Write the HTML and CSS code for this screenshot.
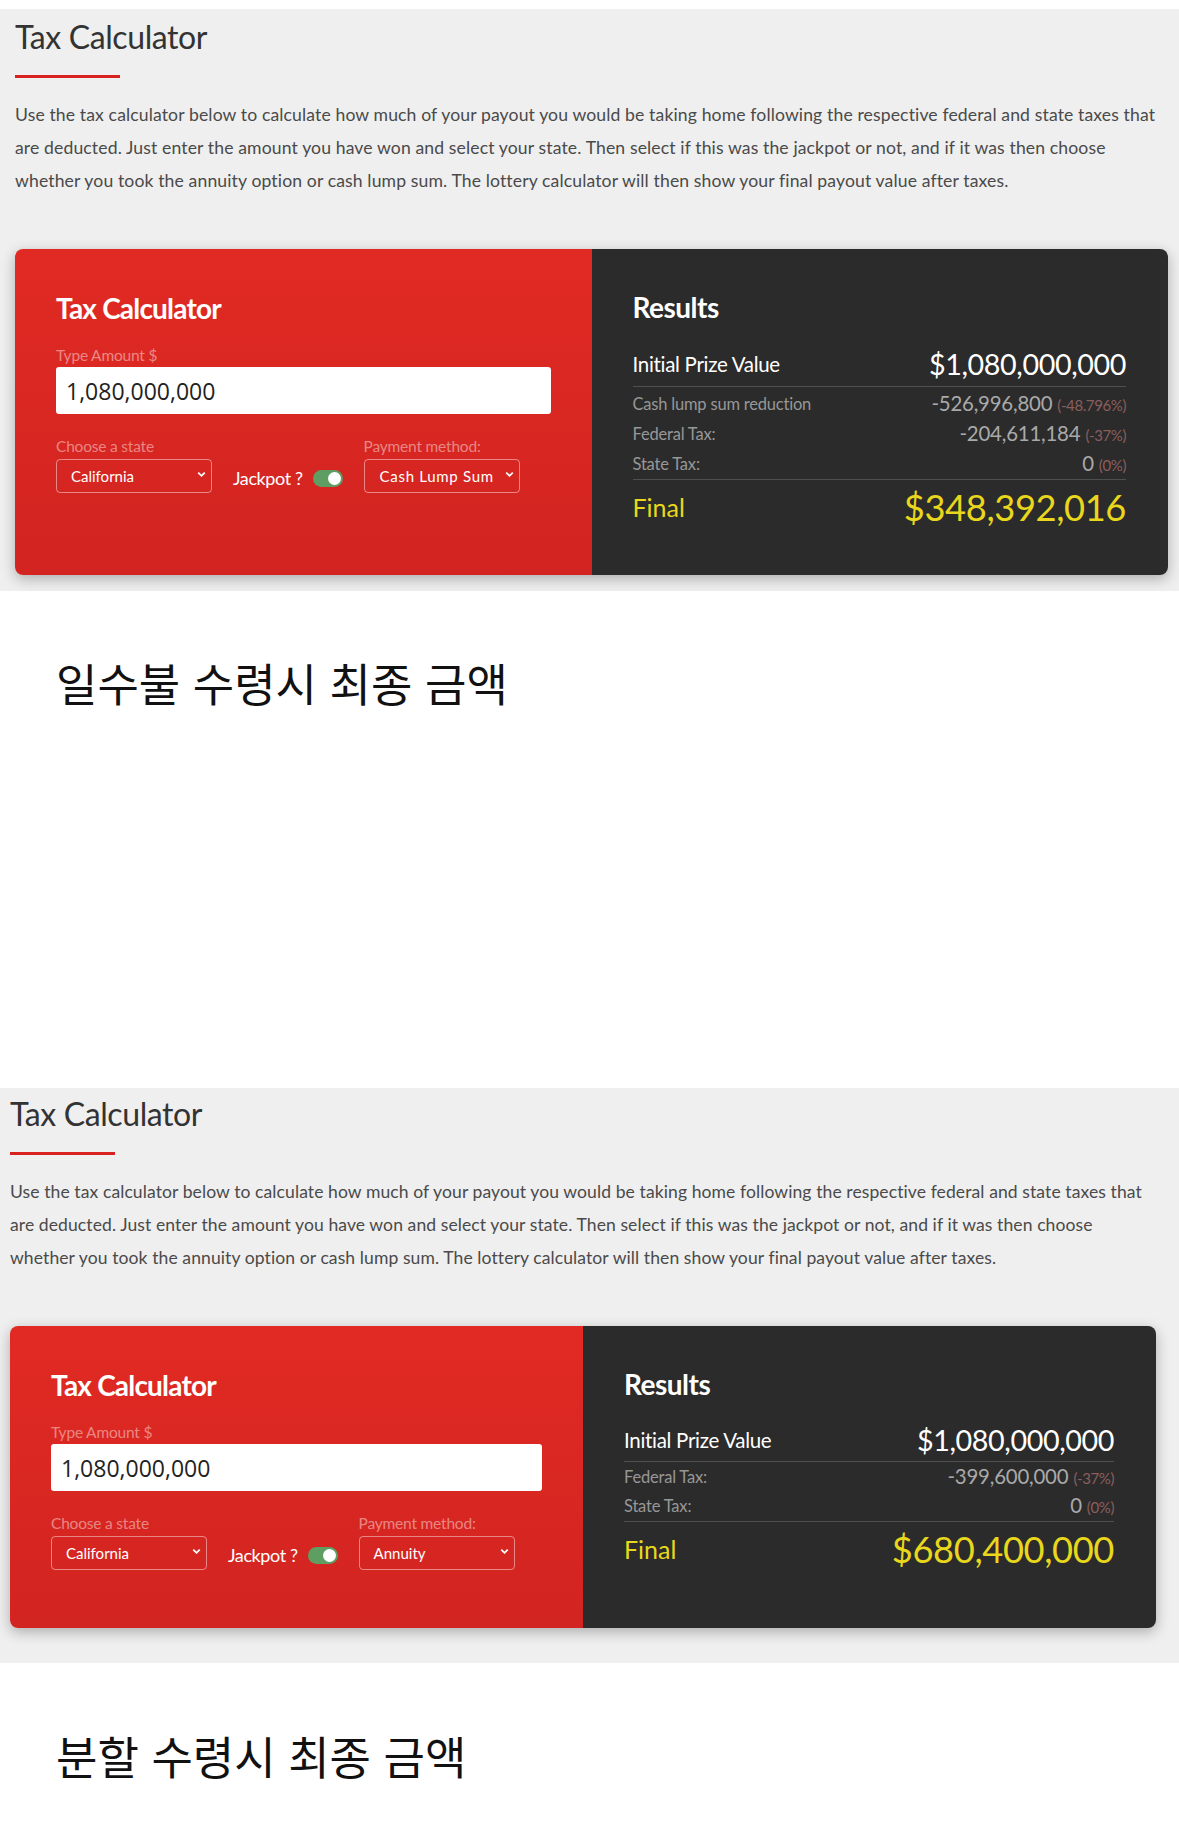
FILE: index.html
```html
<!DOCTYPE html>
<html lang="ko">
<head>
<meta charset="utf-8">
<title>Tax Calculator</title>
<link rel="stylesheet" href="styles.css">
</head>
<body>
<section class="block block--one">
  <h2 class="block-title">Tax Calculator</h2>
  <div class="block-rule"></div>
  <p class="block-text">Use the tax calculator below to calculate how much of your payout you would be taking home following the respective federal and state taxes that<br>are deducted. Just enter the amount you have won and select your state. Then select if this was the jackpot or not, and if it was then choose<br>whether you took the annuity option or cash lump sum. The lottery calculator will then show your final payout value after taxes.</p>
  <div class="calc calc--one">
    <div class="calc-form">
      <h3 class="calc-heading">Tax Calculator</h3>
      <label class="field-label">Type Amount $</label>
      <input class="amount" type="text" value="1,080,000,000">
      <div class="options">
        <div class="option">
          <span class="field-label">Choose a state</span>
          <div class="select"><span>California</span><svg class="chev" viewBox="0 0 10 7" width="9" height="7"><path d="M1.4 1.4 L5 5 L8.6 1.4" fill="none" stroke="#fff" stroke-width="2"/></svg></div>
        </div>
        <div class="jackpot">
          <span class="jackpot-label">Jackpot ?</span>
          <span class="toggle"><span class="knob"></span></span>
        </div>
        <div class="option">
          <span class="field-label">Payment method:</span>
          <div class="select select--wide"><span>Cash Lump Sum</span><svg class="chev" viewBox="0 0 10 7" width="9" height="7"><path d="M1.4 1.4 L5 5 L8.6 1.4" fill="none" stroke="#fff" stroke-width="2"/></svg></div>
        </div>
      </div>
    </div>
    <div class="calc-results">
      <h3 class="calc-heading">Results</h3>
      <div class="row row--main"><span>Initial Prize Value</span><span class="val-main">$1,080,000,000</span></div>
      <div class="subrows">
        <div class="row row--sub"><span>Cash lump sum reduction</span><span class="val-sub">-526,996,800 <small>(-48.796%)</small></span></div>
        <div class="row row--sub"><span>Federal Tax:</span><span class="val-sub">-204,611,184 <small>(-37%)</small></span></div>
        <div class="row row--sub"><span>State Tax:</span><span class="val-sub">0 <small>(0%)</small></span></div>
      </div>
      <div class="row row--final"><span>Final</span><span class="val-final">$348,392,016</span></div>
    </div>
  </div>
</section>
<p class="caption caption--one">일수불 수령시 최종 금액</p>

<section class="block block--two">
  <h2 class="block-title">Tax Calculator</h2>
  <div class="block-rule"></div>
  <p class="block-text">Use the tax calculator below to calculate how much of your payout you would be taking home following the respective federal and state taxes that<br>are deducted. Just enter the amount you have won and select your state. Then select if this was the jackpot or not, and if it was then choose<br>whether you took the annuity option or cash lump sum. The lottery calculator will then show your final payout value after taxes.</p>
  <div class="calc calc--two">
    <div class="calc-form">
      <h3 class="calc-heading">Tax Calculator</h3>
      <label class="field-label">Type Amount $</label>
      <input class="amount" type="text" value="1,080,000,000">
      <div class="options">
        <div class="option">
          <span class="field-label">Choose a state</span>
          <div class="select"><span>California</span><svg class="chev" viewBox="0 0 10 7" width="9" height="7"><path d="M1.4 1.4 L5 5 L8.6 1.4" fill="none" stroke="#fff" stroke-width="2"/></svg></div>
        </div>
        <div class="jackpot">
          <span class="jackpot-label">Jackpot ?</span>
          <span class="toggle"><span class="knob"></span></span>
        </div>
        <div class="option">
          <span class="field-label">Payment method:</span>
          <div class="select"><span>Annuity</span><svg class="chev" viewBox="0 0 10 7" width="9" height="7"><path d="M1.4 1.4 L5 5 L8.6 1.4" fill="none" stroke="#fff" stroke-width="2"/></svg></div>
        </div>
      </div>
    </div>
    <div class="calc-results">
      <h3 class="calc-heading">Results</h3>
      <div class="row row--main"><span>Initial Prize Value</span><span class="val-main">$1,080,000,000</span></div>
      <div class="subrows">
        <div class="row row--sub"><span>Federal Tax:</span><span class="val-sub">-399,600,000 <small>(-37%)</small></span></div>
        <div class="row row--sub"><span>State Tax:</span><span class="val-sub">0 <small>(0%)</small></span></div>
      </div>
      <div class="row row--final"><span>Final</span><span class="val-final">$680,400,000</span></div>
    </div>
  </div>
</section>
<p class="caption caption--two">분할 수령시 최종 금액</p>
</body>
</html>
```
FILE: styles.css
```css
* { box-sizing: border-box; }
html, body { margin: 0; padding: 0; background: #fff; }
body {
  font-family: Lato, "Noto Sans", sans-serif;
  color: #333;
  width: 1179px;
}
.block {
  background: #efefef;
}
.block--one {
  margin-top: 9px;
  padding: 9px 11px 16px 15px;
}
.block--two {
  padding: 7px 23px 35px 10px;
}
.block-title {
  margin: 0;
  font-family: Lato, sans-serif;
  font-weight: 400;
  font-size: 32px;
  line-height: 38px;
  color: #333;
  letter-spacing: -0.4px;
}
.block-rule {
  width: 105px;
  height: 3px;
  background: #d8221f;
  margin-top: 19px;
}
.block-text {
  margin: 20px 0 0;
  font-size: 17.6px;
  line-height: 33px;
  color: #4a4a4a;
  letter-spacing: 0.12px;
  white-space: nowrap;
}
.block--two .block-text {
  font-size: 17.55px;
  letter-spacing: 0.09px;
}
.calc {
  display: grid;
  grid-template-columns: 1fr 1fr;
  margin-top: 52px;
  border-radius: 8px;
  overflow: hidden;
  box-shadow: 0 4px 14px rgba(0,0,0,0.28);
}
.calc--one { min-height: 326px; }
.calc--two { min-height: 302px; }
.calc-form {
  background: linear-gradient(180deg, #e12a23 0%, #d22421 100%);
  padding: 42px 41px 30px 41px;
  color: #fff;
}
.calc-results {
  background: #2b2b2b;
  padding: 41px 42px 20px 41px;
  color: #fff;
}
.calc-heading {
  margin: 0;
  font-size: 28px;
  line-height: 34px;
  font-weight: 700;
  letter-spacing: -0.8px;
  color: #fff;
}
.calc-results .calc-heading { letter-spacing: -0.5px; margin-bottom: 17px; }
.field-label {
  display: block;
  font-size: 15.5px;
  line-height: 18px;
  color: rgba(255,255,255,0.45);
  letter-spacing: -0.2px;
}
.calc-form > .field-label { margin-top: 21px; }
.amount {
  display: block;
  width: 100%;
  height: 47px;
  margin-top: 3px;
  border: 0;
  border-radius: 3px;
  background: #fff;
  padding: 0 10px;
  font-family: "Open Sans", sans-serif;
  font-size: 23px;
  color: #222;
  outline: none;
}
.options {
  display: flex;
  align-items: flex-end;
  gap: 21px;
  margin-top: 23px;
}
.option .field-label { margin-bottom: 4px; }
.select {
  width: 156px;
  height: 34px;
  border: 1px solid rgba(255,255,255,0.45);
  border-radius: 4px;
  display: flex;
  align-items: center;
  justify-content: space-between;
  padding: 0 5px 0 14px;
  font-size: 15px;
  color: #fff;
}
.select--wide { padding-left: 15px; letter-spacing: 0.7px; }
.chev { flex: none; margin-top: -3px; }
.jackpot {
  display: flex;
  align-items: center;
  gap: 10px;
  height: 34px;
  padding-top: 4px;
}
.jackpot-label {
  font-size: 18px;
  color: #fff;
  letter-spacing: -0.4px;
}
.toggle {
  position: relative;
  width: 30px;
  height: 17px;
  border-radius: 9px;
  background: #5f9e63;
  display: inline-block;
}
.knob {
  position: absolute;
  right: 2px;
  top: 2px;
  width: 13px;
  height: 13px;
  border-radius: 50%;
  background: #fff;
}
.row {
  display: flex;
  justify-content: space-between;
  align-items: center;
}
.row--main {
  font-size: 20.5px;
  height: 46px;
  border-bottom: 1px solid #4f4f4f;
  letter-spacing: -0.3px;
}
.calc--two .row--main { height: 44px; }
.val-main { font-size: 28.7px; letter-spacing: -0.4px; }
.subrows {
  padding: 2px 0 0;
  border-bottom: 1px solid #4f4f4f;
}
.calc--two .subrows { padding-top: 1px; }
.row--sub {
  font-size: 16.5px;
  height: 30px;
  line-height: 30px;
  color: #979797;
  letter-spacing: -0.2px;
}
.calc--two .row--sub { height: 29px; line-height: 29px; }
.val-sub { font-size: 20.4px; color: #a9a9a9; letter-spacing: -0.2px; }
.val-sub small { font-size: 15px; color: #8c5e5e; letter-spacing: -0.4px; }
.row--final {
  color: #e8d71c;
  font-size: 25px;
  height: 54px;
}
.val-final { font-size: 36.3px; letter-spacing: -0.4px; }
.caption {
  margin: 0;
  font-family: "Noto Sans CJK KR", sans-serif;
  font-size: 45px;
  line-height: 58px;
  color: #111;
  padding-left: 56px;
}
.caption--one { padding-top: 63px; padding-bottom: 376px; }
.caption--two { padding-top: 64px; }
```
